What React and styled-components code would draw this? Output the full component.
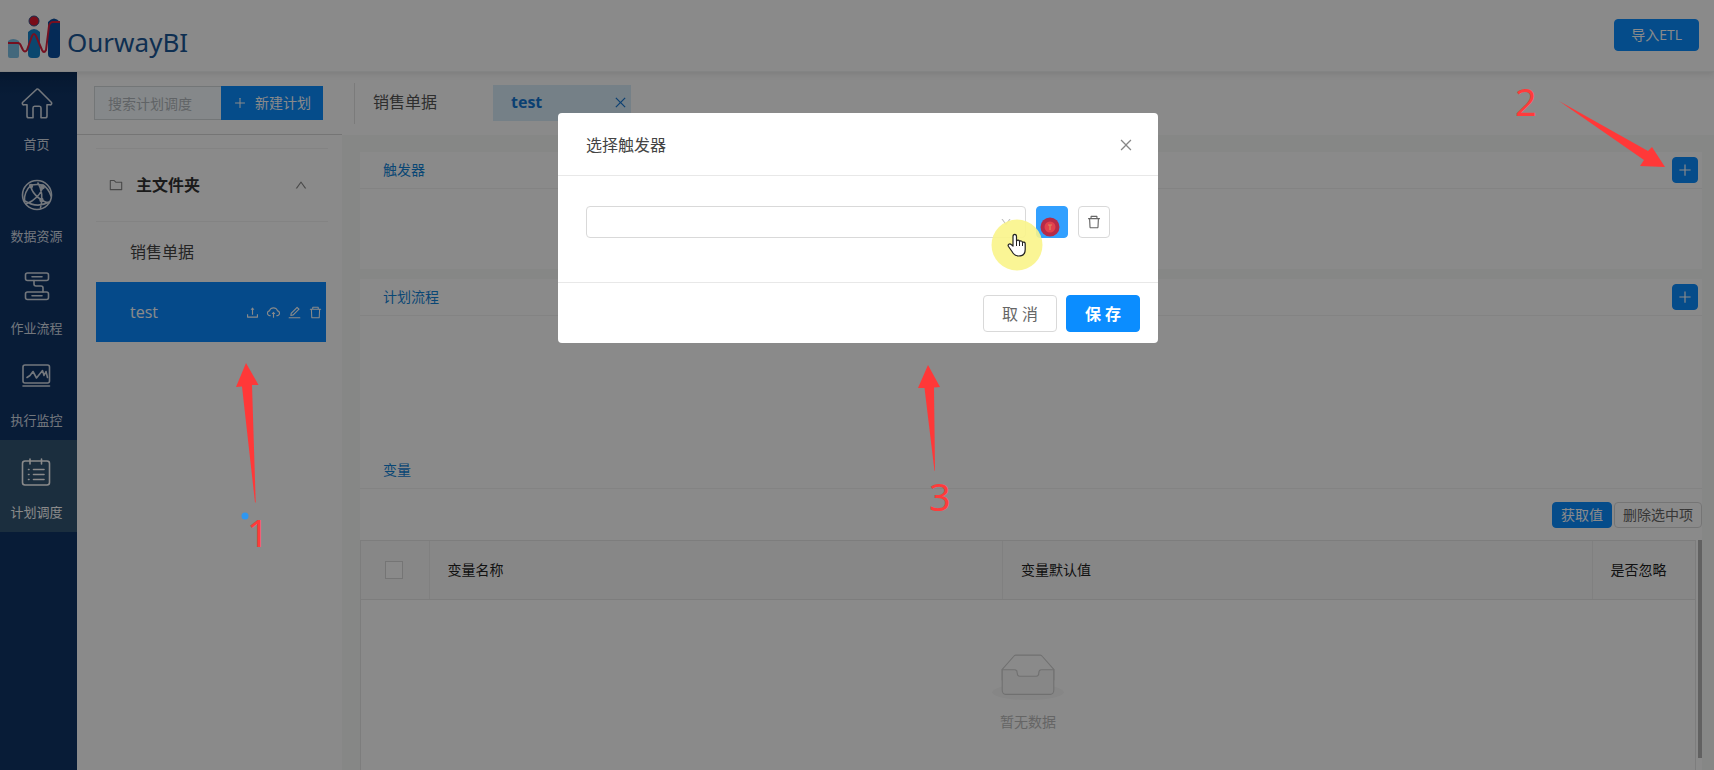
import React from "react";
import styled, { createGlobalStyle, css } from "styled-components";
import {
  AiOutlineFolder,
  AiOutlineUp,
  AiOutlineDown,
  AiOutlineClose,
  AiOutlineDelete,
  AiOutlineEdit,
  AiOutlineUpload,
  AiOutlineCloudUpload,
  AiOutlinePlus,
} from "react-icons/ai";

const GlobalStyle = createGlobalStyle`
  *, *::before, *::after { box-sizing: border-box; }
  body {
    margin: 0;
    background: #fff;
    color: #333;
    font-family: "Open Sans", "Noto Sans CJK SC", sans-serif;
    font-size: 14px;
    line-height: 22px;
  }
  button, input, select { font: inherit; margin: 0; }
  button { cursor: pointer; }
  h1, h2, p, ul { margin: 0; padding: 0; }
  svg { display: block; }
`;

/* ---------- page frame ---------- */

const Page = styled.div`
  position: relative;
  display: flex;
  flex-direction: column;
  height: 100vh;
  overflow: hidden;
`;

const Header = styled.header`
  display: flex;
  align-items: center;
  justify-content: space-between;
  flex: none;
  height: 72px;
  padding: 0 15px 2px 8px;
  border-bottom: 1px solid #f2f4f4;
  box-shadow: 0 2px 6px rgba(0, 0, 0, 0.1);
  position: relative;
`;

const Brand = styled.a`
  display: flex;
  align-items: center;
  gap: 7px;
  padding-top: 4px;
  color: #1b5796;
  font-family: "Noto Sans", sans-serif;
  font-size: 26px;
  line-height: 36px;
  text-decoration: none;

  span { padding-top: 10px; }
`;

const Body = styled.div`
  display: flex;
  flex: 1;
  min-height: 0;
`;

const Button = styled.button`
  display: inline-flex;
  align-items: center;
  justify-content: center;
  gap: 8px;
  height: ${(p) => p.$h || 32}px;
  padding: 0 ${(p) => p.$px || 16}px;
  border: 1px solid #d9d9d9;
  border-radius: ${(p) => (p.$square ? 0 : 4)}px;
  background: #fff;
  color: #666;
  white-space: nowrap;
  ${(p) =>
    p.$primary &&
    css`
      border-color: #0b8dff;
      background: #0b8dff;
      color: #fff;
    `}
`;

const IconButton = styled(Button)`
  width: ${(p) => p.$h || 32}px;
  padding: 0;
  font-size: 16px;
  ${(p) =>
    p.$hover &&
    css`
      border-color: #32a0ff;
      background: #32a0ff;
    `}
`;

const GhostIcon = styled.button`
  display: flex;
  padding: 0;
  border: 0;
  background: none;
  color: inherit;
  font-size: ${(p) => p.$size || 14}px;
`;

/* ---------- side navigation ---------- */

const Nav = styled.nav`
  flex: none;
  width: 77px;
  background: linear-gradient(#0b2c58, #0f3567 24px, #0f3467);
`;

const NavItem = styled.a`
  display: flex;
  flex-direction: column;
  align-items: center;
  justify-content: space-between;
  height: 92px;
  padding: 13px 4px 8px 0;
  background: ${(p) => (p.$active ? "#325573" : "transparent")};
  color: ${(p) => (p.$active ? "#fff" : "#d5dce6")};
  font-size: 13px;
  line-height: 24px;
  text-decoration: none;
`;

/* ---------- plan list ---------- */

const Aside = styled.aside`
  flex: none;
  width: 265px;
`;

const SearchRow = styled.form`
  display: flex;
  padding: 14px 19px 14px 17px;
  border-bottom: 1px solid #d9d9d9;

  input {
    flex: 1;
    min-width: 0;
    height: 34px;
    padding: 0 13px;
    border: 1px solid #d5dadd;
    border-right: 0;
    border-radius: 0;
    background: #f6fbff;
    outline: none;
  }
  input::placeholder { color: #b2b8bc; opacity: 1; }
`;

const Folder = styled.button`
  display: flex;
  align-items: center;
  gap: 12px;
  width: 232px;
  height: 74px;
  margin: 13px 0 0 19px;
  padding: 0 20px 0 12px;
  border: 0;
  border-top: 1px solid #f3f3f3;
  border-bottom: 1px solid #f3f3f3;
  background: none;
  color: #888;

  strong {
    flex: 1;
    color: #333;
    font-size: 16px;
    text-align: left;
  }
`;

const PlanList = styled.ul`
  list-style: none;
  padding: 0 16px 0 19px;
`;

const Plan = styled.li`
  display: flex;
  align-items: center;
  justify-content: space-between;
  height: 60px;
  padding: 0 3px 0 34px;
  background: ${(p) => (p.$active ? "#0b8aff" : "transparent")};
  color: ${(p) => (p.$active ? "#fff" : "#444")};
  font-size: 16px;
`;

const PlanActions = styled.div`
  display: flex;
  gap: 6px;
`;

/* ---------- work area ---------- */

const Main = styled.main`
  display: flex;
  flex-direction: column;
  flex: 1;
  min-width: 0;
  background: #f7f9f7;
`;

const TabBar = styled.div`
  display: flex;
  flex: none;
  height: 63px;
  padding: 11px 12px;
  background: #fff;
`;

const TabList = styled.div`
  display: flex;
  padding-top: 2px;
  border-left: 1px solid #e3e3e3;
`;

const Tab = styled.div`
  display: flex;
  align-items: center;
  justify-content: space-between;
  width: 138px;
  height: 36px;
  padding: 0 3px 2px 18px;
  background: ${(p) => (p.$active ? "#d8ecfa" : "transparent")};
  color: ${(p) => (p.$active ? "#1677d2" : "#555")};
  font-size: 16px;
  font-weight: ${(p) => (p.$active ? 700 : 400)};
`;

const Sections = styled.div`
  display: flex;
  flex-direction: column;
  flex: 1;
  gap: 10px;
  min-height: 0;
  padding: 17px 12px 0 18px;
`;

const Card = styled.section`
  display: flex;
  flex-direction: column;
  flex: ${(p) => (p.$grow ? "1" : "none")};
  min-height: ${(p) => p.$min || 0}px;
  background: #fff;
`;

const CardTitle = styled.header`
  display: flex;
  align-items: center;
  justify-content: space-between;
  height: 37px;
  padding: 0 4px 0 23px;
  border-bottom: 1px solid #f3f3f3;

  h2 {
    color: #1284d8;
    font-size: 14px;
    font-weight: 400;
  }
`;

const Flow = styled.div`
  height: 136px;
`;

const Toolbar = styled.div`
  display: flex;
  justify-content: flex-end;
  gap: 2px;
  padding: 13px 0 12px;
`;

const TableArea = styled.div`
  display: flex;
  flex: 1;
  gap: 2px;
  min-height: 0;
`;

const TableFrame = styled.div`
  flex: 1;
  border: 1px solid #e8e8e8;
  border-bottom: 0;
`;

const ScrollThumb = styled.div`
  width: 4px;
  margin-bottom: 12px;
  background: #b4b4b4;
`;

const Table = styled.table`
  width: 100%;
  border-collapse: collapse;
  table-layout: fixed;

  th {
    height: 58px;
    padding: 0 18px;
    border-bottom: 1px solid #e8e8e8;
    background: #fafafa;
    color: #222;
    font-weight: 400;
    text-align: left;
  }
  th + th { border-left: 1px solid #ececec; }
  th:first-child { padding: 0 24px; }
  td { padding: 54px 0 0; }
  col:nth-child(1) { width: 68px; }
  col:nth-child(2) { width: 43%; }
  col:nth-child(4) { width: 103px; }
`;

const Checkbox = styled.input`
  display: block;
  appearance: none;
  width: 18px;
  height: 18px;
  margin: 0;
  border: 1px solid #d9d9d9;
  background: #fff;
`;

const Empty = styled.div`
  display: flex;
  flex-direction: column;
  align-items: center;
  gap: 11px;
  color: #bbb;
`;

/* ---------- dialog ---------- */

const Mask = styled.div`
  position: absolute;
  inset: 0;
  display: flex;
  align-items: flex-start;
  justify-content: center;
  padding: 113px 0 0 2px;
  background: rgba(0, 0, 0, 0.46);
`;

const Dialog = styled.div`
  position: relative;
  width: 600px;
  border-radius: 4px;
  background: #fff;
`;

const DialogHeader = styled.header`
  display: flex;
  align-items: center;
  justify-content: space-between;
  height: 63px;
  padding: 2px 24px 0 28px;
  border-bottom: 1px solid #e8e8e8;
  color: #888;

  h1 {
    color: #444;
    font-size: 16px;
    font-weight: 400;
  }
`;

const TriggerRow = styled.div`
  display: flex;
  gap: 10px;
  padding: 30px 48px 44px 28px;
`;

const SelectBox = styled.label`
  position: relative;
  flex: 1;

  select {
    display: block;
    width: 100%;
    height: 32px;
    appearance: none;
    padding: 0 32px 0 12px;
    border: 1px solid #d9d9d9;
    border-radius: 4px;
    background: #fff;
  }
  svg {
    position: absolute;
    right: 14px;
    top: 10px;
    color: #bfbfbf;
    font-size: 12px;
  }
`;

const DialogFooter = styled.footer`
  display: flex;
  justify-content: flex-end;
  gap: 9px;
  padding: 12px 18px 11px 0;
  border-top: 1px solid #e8e8e8;
`;

const FooterButton = styled(Button)`
  width: 74px;
  height: 37px;
  padding: 0;
  font-size: 16px;
  font-weight: ${(p) => (p.$primary ? 700 : 400)};
`;

const Pointer = styled.svg`
  position: absolute;
  left: 432px;
  top: 80px;
  pointer-events: none;
`;

/* ---------- step callouts ---------- */

const Step = styled.div`
  position: absolute;
  left: ${(p) => p.$x}px;
  top: ${(p) => p.$y}px;
  color: #ff3b3b;
  font-family: "Noto Sans", sans-serif;
  font-size: 38px;
  line-height: 40px;
`;

const Arrow = styled.svg`
  position: absolute;
  left: ${(p) => p.$x}px;
  top: ${(p) => p.$y}px;
  fill: #ff3838;
`;

/* ---------- drawings ---------- */

const Logo = () => (
  <svg width="52" height="44" viewBox="0 0 52 44" aria-hidden="true">
    <path d="M0 26q5-4 11 0v15q0 2-2 2H2q-2 0-2-2z" fill="#7cc0e6" />
    <path d="M20 17q6-6 12 0v22q0 4-4 4h-4q-4 0-4-4z" fill="#1683cc" />
    <path d="M40 7q6-7 12 0v32q0 4-4 4h-4q-4 0-4-4z" fill="#0a4fa0" />
    <circle cx="26" cy="6" r="5" fill="#e0182f" stroke="#31548c" strokeWidth="1" />
    <path
      d="M0 28h10q2 0 3 3l2 4q2 3 4 0l5-14q2-4 4 0l6 14q2 4 4 0l3-24q1-4 4-4h7"
      fill="none"
      stroke="#d81e3c"
      strokeWidth="2"
      strokeLinejoin="round"
    />
  </svg>
);

const NavSvg = ({ children }) => (
  <svg
    width="32"
    height="36"
    viewBox="0 0 32 36"
    fill="none"
    stroke="currentColor"
    strokeWidth="1.6"
    strokeLinecap="round"
    strokeLinejoin="round"
    aria-hidden="true"
  >
    {children}
  </svg>
);

const HomeIcon = () => (
  <NavSvg>
    <path d="M16 4L1.500 17.500c-.6 1.300.4 2.500 1.500 2.300h3V31c0 1.200.6 1.800 1.800 1.800H12V23c0-1 .6-1.700 1.600-1.700h4.800c1 0 1.600.7 1.600 1.700v9.800h4.200c1.200 0 1.800-.6 1.800-1.800V19.800h3c1.100.2 2.100-1 1.500-2.300L17.300 4.300c-.4-.4-.9-.4-1.300-.3z" />
  </NavSvg>
);

const GlobeIcon = () => (
  <NavSvg>
    <circle cx="16" cy="18" r="14.500" />
    <path d="M10 8c3.500-.5 8.500-.5 12 0M10 8C5 13 3 18 3.500 24M10 8c-.5 6 7 15 17.500 18M22 8C21 17 13 24 5 27M22 8c4.500 3 6.500 6 8 11M17 6c4 6 5 16 2.500 25M4 24c8 5 17 5 24 1" />
    <circle cx="10" cy="9" r="1.400" fill="currentColor" />
    <circle cx="21.500" cy="10" r="1.600" fill="currentColor" />
    <circle cx="20.500" cy="23" r="1.400" fill="currentColor" />
  </NavSvg>
);

const FlowIcon = () => (
  <NavSvg>
    <rect x="4.500" y="4" width="23" height="7.500" rx="2" />
    <rect x="4.500" y="23" width="23" height="7.500" rx="2" />
    <path d="M11 7.700h10M11 26.700h10M13 11.500v3.500c0 1.500.6 2 2 2h5c1.400 0 2 .6 2 2v4" />
  </NavSvg>
);

const MonitorIcon = () => (
  <NavSvg>
    <rect x="2" y="4" width="26.500" height="18" rx="2" />
    <path d="M2 25h26.500" />
    <path d="M6 16.500l3-2 3-4 3.500 6.500 6-7.500 1.500 5 2-4 1.500 6" />
  </NavSvg>
);

const ScheduleIcon = () => (
  <NavSvg>
    <path d="M4 8h22c1.700 0 2.500.8 2.500 2.500v19c0 1.700-.8 2.500-2.500 2.500H4c-1.700 0-2.500-.8-2.500-2.500v-19C1.500 8.800 2.300 8 4 8zM9 6v5M20.500 6v5M12.500 16.500h10.500M12.500 21.500h10.500M12.500 26.500h10.500M7.500 16.500h.5M7.500 21.500h.5M7.500 26.500h.5" />
  </NavSvg>
);

const EmptyBox = () => (
  <svg width="72" height="46" viewBox="0 0 64 41" aria-hidden="true">
    <g transform="translate(0 1)" fill="none" stroke="#d0d0d0">
      <ellipse cx="32" cy="33" rx="32" ry="7" fill="#f8f8f8" stroke="none" />
      <path d="M55 12.760L44.854 1.258C44.367.474 43.656 0 42.907 0H21.093c-.749 0-1.460.474-1.947 1.257L9 12.761V22h46v-9.240z" />
      <path
        d="M41.613 15.931c0-1.605.994-2.930 2.227-2.931H55v18.137C55 33.260 53.680 35 52.050 35h-40.100C10.320 35 9 33.259 9 31.137V13h11.160c1.233 0 2.227 1.323 2.227 2.928v.022c0 1.605 1.005 2.901 2.237 2.901h14.752c1.232 0 2.237-1.308 2.237-2.913v-.007z"
        fill="#fafafa"
      />
    </g>
  </svg>
);

const NAV = [
  ["首页", HomeIcon],
  ["数据资源", GlobeIcon],
  ["作业流程", FlowIcon],
  ["执行监控", MonitorIcon],
  ["计划调度", ScheduleIcon],
];

const ACTIONS = [
  ["上传", AiOutlineUpload],
  ["发布", AiOutlineCloudUpload],
  ["编辑", AiOutlineEdit],
  ["删除", AiOutlineDelete],
];

export default function App() {
  return (
    <Page>
      <GlobalStyle />
      <Header>
        <Brand href="#">
          <Logo />
          <span>OurwayBI</span>
        </Brand>
        <Button type="button" $primary>导入ETL</Button>
      </Header>

      <Body>
        <Nav>
          {NAV.map(([label, Icon]) => (
            <NavItem key={label} href="#" $active={label === "计划调度"}>
              <Icon />
              {label}
            </NavItem>
          ))}
        </Nav>

        <Aside>
          <SearchRow>
            <input type="text" placeholder="搜索计划调度" aria-label="搜索计划调度" />
            <Button type="button" $primary $square $h={34} $px={11}>
              <AiOutlinePlus />
              新建计划
            </Button>
          </SearchRow>
          <Folder type="button">
            <AiOutlineFolder size={16} />
            <strong>主文件夹</strong>
            <AiOutlineUp size={14} />
          </Folder>
          <PlanList>
            <Plan>销售单据</Plan>
            <Plan $active>
              test
              <PlanActions>
                {ACTIONS.map(([label, Icon]) => (
                  <GhostIcon key={label} type="button" $size={15} aria-label={label}>
                    <Icon />
                  </GhostIcon>
                ))}
              </PlanActions>
            </Plan>
          </PlanList>
        </Aside>

        <Main>
          <TabBar>
            <TabList>
              <Tab>销售单据</Tab>
              <Tab $active>
                test
                <GhostIcon type="button" $size={15} aria-label="关闭标签">
                  <AiOutlineClose />
                </GhostIcon>
              </Tab>
            </TabList>
          </TabBar>

          <Sections>
            <Card $min={117}>
              <CardTitle>
                <h2>触发器</h2>
                <IconButton type="button" $primary $h={26} aria-label="添加触发器">
                  <AiOutlinePlus />
                </IconButton>
              </CardTitle>
            </Card>

            <Card $grow>
              <CardTitle>
                <h2>计划流程</h2>
                <IconButton type="button" $primary $h={26} aria-label="添加计划流程">
                  <AiOutlinePlus />
                </IconButton>
              </CardTitle>
              <Flow />
              <CardTitle>
                <h2>变量</h2>
              </CardTitle>
              <Toolbar>
                <Button type="button" $primary $h={26} $px={8}>获取值</Button>
                <Button type="button" $h={26} $px={8}>删除选中项</Button>
              </Toolbar>
              <TableArea>
                <TableFrame>
                  <Table>
                    <colgroup>
                      <col />
                      <col />
                      <col />
                      <col />
                    </colgroup>
                    <thead>
                      <tr>
                        <th>
                          <Checkbox type="checkbox" aria-label="全选" />
                        </th>
                        <th>变量名称</th>
                        <th>变量默认值</th>
                        <th>是否忽略</th>
                      </tr>
                    </thead>
                    <tbody>
                      <tr>
                        <td colSpan={4}>
                          <Empty>
                            <EmptyBox />
                            <p>暂无数据</p>
                          </Empty>
                        </td>
                      </tr>
                    </tbody>
                  </Table>
                </TableFrame>
                <ScrollThumb />
              </TableArea>
            </Card>
          </Sections>
        </Main>
      </Body>

      <Mask>
        <Dialog role="dialog" aria-modal="true" aria-labelledby="dialog-title">
          <DialogHeader>
            <h1 id="dialog-title">选择触发器</h1>
            <GhostIcon type="button" $size={16} aria-label="关闭">
              <AiOutlineClose />
            </GhostIcon>
          </DialogHeader>
          <TriggerRow>
            <SelectBox>
              <select aria-label="触发器" defaultValue="">
                <option value="" />
              </select>
              <AiOutlineDown />
            </SelectBox>
            <IconButton type="button" $primary $hover aria-label="添加" />
            <IconButton type="button" aria-label="删除">
              <AiOutlineDelete />
            </IconButton>
          </TriggerRow>
          <DialogFooter>
            <FooterButton type="button">取 消</FooterButton>
            <FooterButton type="button" $primary>保 存</FooterButton>
          </DialogFooter>
          <Pointer width="76" height="80" viewBox="0 0 76 80" aria-hidden="true">
            <circle cx="27" cy="52" r="25.500" fill="#f9f48a" fillOpacity="0.900" />
            <circle cx="60" cy="34" r="9.500" fill="#b52b48" />
            <circle cx="60" cy="34" r="5.500" fill="#e2414c" />
            <path d="M58 32h4M60 32v5" stroke="#d98a5c" strokeWidth="1.200" />
            <path
              d="M23 53V43.500c0-2.800 3.500-2.800 3.500 0V48c.6-1.400 3-1.200 3 .5.700-1 3-.7 3 1 .8-.9 2.700-.4 2.700 1.300v5.700c0 4-2.500 6.500-6.500 6.500-3.500 0-5.200-1.500-6.700-4.500l-3.500-5c-1.200-2 1.200-3.500 2.700-2z"
              fill="#fff"
              stroke="#222"
              strokeWidth="1.200"
              strokeLinejoin="round"
            />
            <path d="M26.500 48v5M29.500 48.500V53M32.500 49.500V53" stroke="#222" strokeWidth="1" />
          </Pointer>
        </Dialog>
      </Mask>

      <Arrow $x={236} $y={363} width="23" height="140" viewBox="0 0 23 140" aria-hidden="true">
        <path d="M10 0L0 24l6-.5L19 139.500h.7L16 22h6.500z" />
      </Arrow>
      <Arrow $x={240} $y={510} width="10" height="10" viewBox="0 0 10 10" aria-hidden="true">
        <circle cx="5" cy="6" r="3.500" fill="#2f97f0" />
      </Arrow>
      <Step $x={247} $y={512}>1</Step>

      <Arrow $x={1559} $y={101} width="107" height="67" viewBox="0 0 107 67" aria-hidden="true">
        <path d="M0 0l89 50 4-4 13 20-25-1 4-6z" />
      </Arrow>
      <Step $x={1515} $y={81}>2</Step>

      <Arrow $x={918} $y={365} width="22" height="107" viewBox="0 0 22 107" aria-hidden="true">
        <path d="M10 0L0 23h6.500L16.500 106l.5-.5L16 22.500l6-.5z" />
      </Arrow>
      <Step $x={929} $y={476}>3</Step>
    </Page>
  );
}
